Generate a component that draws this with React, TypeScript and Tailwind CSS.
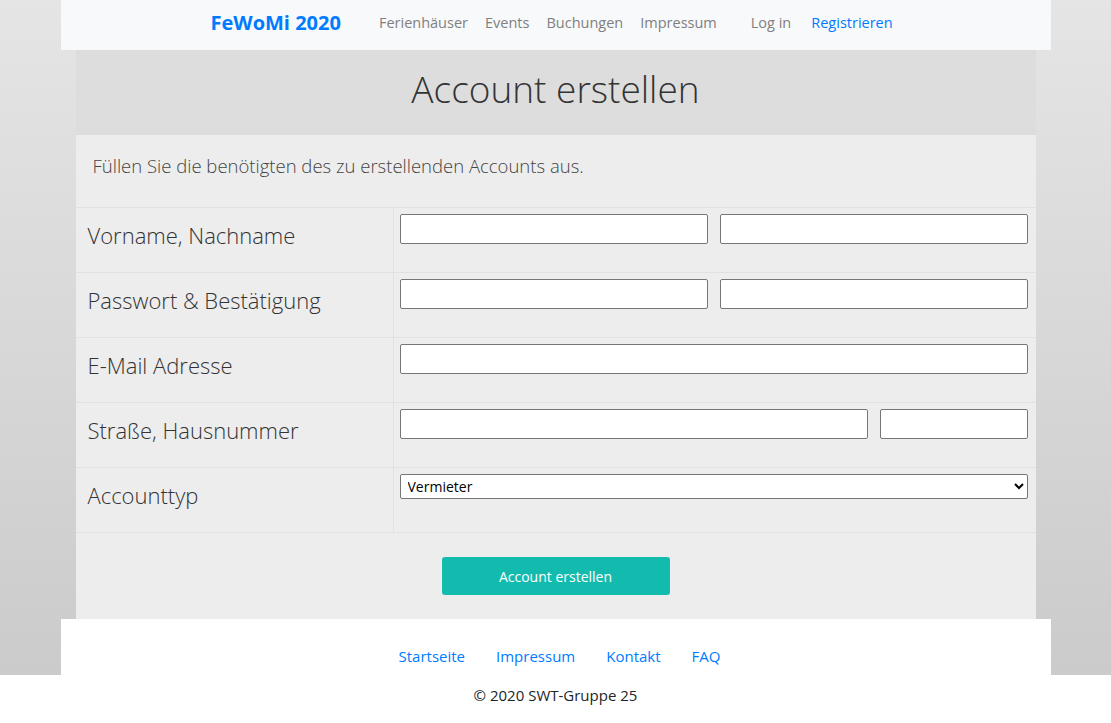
import React from "react";

const sans = { fontFamily: '"Open Sans", "Noto Sans", sans-serif' };

function Row({ label, children }: { label: string; children: React.ReactNode }) {
  return (
    <div className="flex h-[65px] border-b border-[#dfe1e4]">
      <div className="w-[318px] shrink-0 border-r border-[#dfe1e4] pl-3 pt-[11px] text-[22px] font-light text-[#333]">
        {label}
      </div>
      <div className="flex flex-1 gap-3 pl-[6px] pr-[6px] pt-[6px]">{children}</div>
    </div>
  );
}

const inputCls = "h-[30px] rounded-[2px] border border-[#767676] bg-white";

export default function App() {
  return (
    <div className="min-h-[723px] bg-white" style={sans}>
      <div className="h-[675px] bg-gradient-to-b from-[#e5e5e5] to-[#cbcbcb]">
        <nav className="mx-auto flex h-[50px] w-[990px] items-center bg-[#f8f9fa] pb-[4px] pl-[150px]">
          <span className="text-[20px] font-bold text-[#007bff]">FeWoMi 2020</span>
          <div className="ml-[38px] flex gap-[17px] text-[14.5px] text-[#808080]">
            <span>Ferienhäuser</span>
            <span>Events</span>
            <span>Buchungen</span>
            <span>Impressum</span>
          </div>
          <div className="ml-[34px] flex gap-[20px] text-[14.5px]">
            <span className="text-[#808080]">Log in</span>
            <span className="text-[#007bff]">Registrieren</span>
          </div>
        </nav>
        <main className="mx-auto w-[960px]">
          <div className="flex h-[85px] items-center justify-center bg-[#dddddd] pb-[7px]">
            <h1 className="text-[37px] font-light text-[#333]">Account erstellen</h1>
          </div>
          <div className="bg-[#ededed]">
            <div className="h-[73px] border-b border-[#dfe1e4] pl-[17px] pt-[17px] text-[18.5px] font-light text-[#444]">
              Füllen Sie die benötigten des zu erstellenden Accounts aus.
            </div>
            <Row label="Vorname, Nachname">
              <input className={inputCls + " w-[308px]"} />
              <input className={inputCls + " w-[308px]"} />
            </Row>
            <Row label="Passwort & Bestätigung">
              <input type="password" className={inputCls + " w-[308px]"} />
              <input type="password" className={inputCls + " w-[308px]"} />
            </Row>
            <Row label="E-Mail Adresse">
              <input className={inputCls + " w-[628px]"} />
            </Row>
            <Row label="Straße, Hausnummer">
              <input className={inputCls + " w-[468px]"} />
              <input className={inputCls + " w-[148px]"} />
            </Row>
            <Row label="Accounttyp">
              <select
                className="h-[25px] w-[628px] rounded-[2px] border border-[#767676] bg-white pl-[3px] text-[14px] text-black"
                style={{ fontFamily: '"Open Sans", sans-serif', appearance: "auto" }}
                defaultValue="Vermieter"
              >
                <option>Vermieter</option>
                <option>Mieter</option>
              </select>
            </Row>
            <div className="flex h-[86px] items-start justify-center pt-[24px]">
              <button className="h-[38px] w-[228px] rounded-[3px] bg-[#13bbaf] text-[14px] text-white">
                Account erstellen
              </button>
            </div>
          </div>
        </main>
        <div className="mx-auto flex h-[56px] w-[990px] items-center justify-center gap-[31px] bg-white pl-[8px] pt-[18px] text-[15px] text-[#007bff]">
          <span>Startseite</span>
          <span>Impressum</span>
          <span>Kontakt</span>
          <span>FAQ</span>
        </div>
      </div>
      <div className="flex h-[40px] items-center justify-center text-[15px] text-[#212529]">
        © 2020 SWT-Gruppe 25
      </div>
    </div>
  );
}
